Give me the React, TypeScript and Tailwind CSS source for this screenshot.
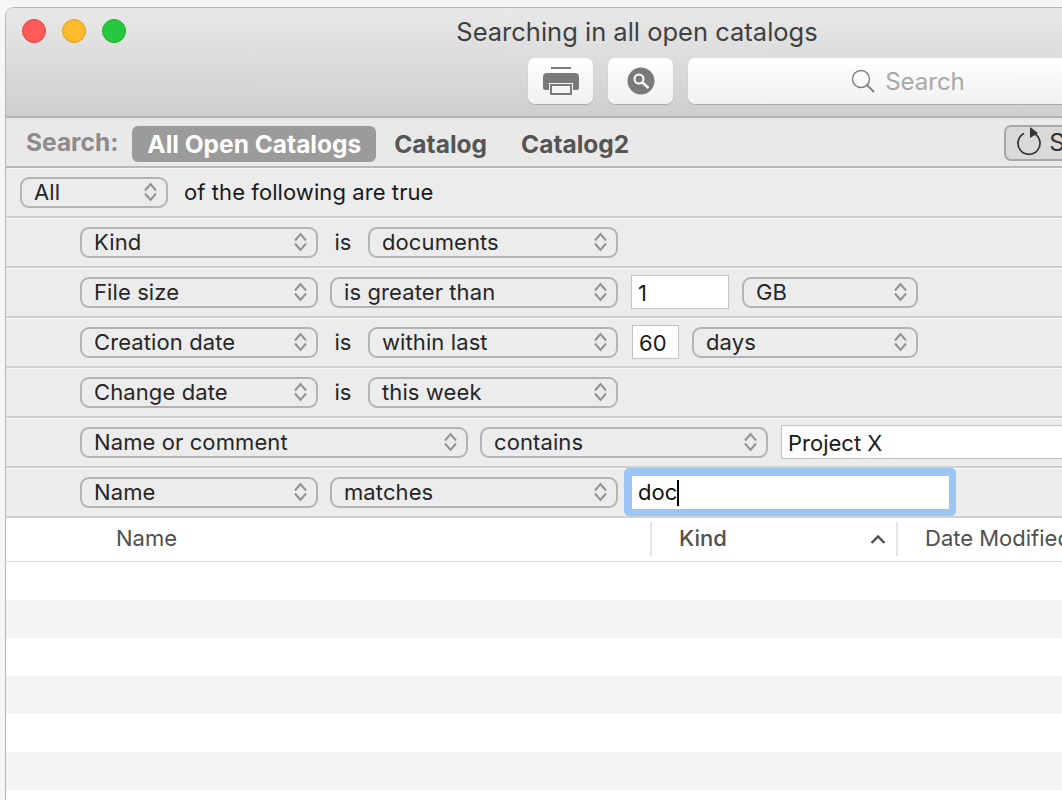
import React from 'react';

const font = { fontFamily: 'Inter, "Liberation Sans", sans-serif' };

const Stepper = () => (
    <svg width="13" height="20" viewBox="0 0 13 20" fill="none" stroke="#939393" strokeWidth="2" className="shrink-0">
        <path d="M1 8.5 L6.5 2 L12 8.5" />
        <path d="M1 11.5 L6.5 18 L12 11.5" />
    </svg>
);

const Select: React.FC<{ label: string; width: string }> = ({ label, width }) => (
    <div className={`${width} h-[31px] shrink-0 flex items-center justify-between pl-[12px] pr-[9px] rounded-[9px] border-2 border-[#b3b3b3] bg-[#ececec] text-[22px] text-[#262626]`}>
        <span className="tracking-[0.1px]">{label}</span>
        <Stepper />
    </div>
);

const Row: React.FC<{ children: React.ReactNode }> = ({ children }) => (
    <div className="h-[50px] flex items-center pl-[74px] border-b-2 border-[#cfcfcf] shadow-[inset_0_1px_0_#f8f8f8]">
        {children}
    </div>
);

const Is = () => <span className="w-[50px] text-center text-[22px] text-[#262626] shrink-0">is</span>;

const TextBox: React.FC<{ value: string; width: string; className?: string }> = ({ value, width, className }) => (
    <div className={`${width} ${className ?? ''} h-[34px] shrink-0 flex items-center pl-[6px] pt-[3px] bg-white border border-[#c4c4c4] text-[22px] text-[#1a1a1a]`}>
        {value}
    </div>
);

export default function App() {
    const stripes = ['bg-white', 'bg-[#f4f4f4]', 'bg-white', 'bg-[#f4f4f4]', 'bg-white', 'bg-[#f4f4f4]'];

    return (
        <div style={font} className="h-[800px] w-[1062px] overflow-hidden bg-[#f6f6f6] pl-[5px] pt-[7px]">
            <div className="w-[1262px] h-[793px] rounded-t-[9px] border-l border-t border-[#b5b5b5] bg-white overflow-hidden">
                {/* title bar and toolbar */}
                <div className="h-[110px] bg-gradient-to-b from-[#e8e8e8] to-[#cfcfcf] border-b-2 border-[#b2b2b2] pl-[15px] pr-[16px] pt-[11px]">
                    <div className="relative h-[26px] flex items-center justify-center pl-[2px] text-[25.5px] text-[#3f3f3f]">
                        <div className="absolute left-[1px] top-0 flex gap-[16px]">
                            <span className="w-6 h-6 rounded-full bg-[#fc5b57] border border-[#e0443e]" />
                            <span className="w-6 h-6 rounded-full bg-[#febb2e] border border-[#dfa023]" />
                            <span className="w-6 h-6 rounded-full bg-[#26c83f] border border-[#1dad2b]" />
                        </div>
                        Searching in all open catalogs
                    </div>
                    <div className="flex gap-[15px] mt-[13px] pl-[507px]">
                        <div className="w-[65px] h-[46px] flex items-center justify-center rounded-[7px] bg-gradient-to-b from-white to-[#f1f1f1] shadow-[0_1px_1px_#aaaaaa]">
                            <svg width="36" height="30" viewBox="0 0 36 30">
                                <path d="M8 1 H28 V3 H8 Z" fill="#7a7a7a" />
                                <path d="M4 7 H32 Q36 7 36 11 V22 Q36 24 33 24 H30 V17 H6 V24 H3 Q0 24 0 22 V11 Q0 7 4 7 Z" fill="#7a7a7a" />
                                <path d="M7 18 H29 V29 H7 Z M9 20 V27 H27 V20 Z" fill="#7a7a7a" fillRule="evenodd" />
                            </svg>
                        </div>
                        <div className="w-[65px] h-[46px] flex items-center justify-center rounded-[7px] bg-gradient-to-b from-white to-[#f1f1f1] shadow-[0_1px_1px_#aaaaaa]">
                            <svg width="28" height="28" viewBox="0 0 28 28">
                                <circle cx="14" cy="14" r="13.5" fill="#7a7a7a" />
                                <circle cx="12" cy="12" r="4.5" fill="none" stroke="#fff" strokeWidth="2" />
                                <path d="M15.5 15.5 L21.5 21" stroke="#fff" strokeWidth="2.4" />
                            </svg>
                        </div>
                        <div className="w-[440px] h-[46px] flex items-center justify-center gap-[10px] rounded-[7px] bg-gradient-to-b from-white to-[#f1f1f1] shadow-[0_1px_1px_#aaaaaa] text-[24px] text-[#a8a8a8]">
                            <svg width="24" height="24" viewBox="0 0 24 24" fill="none" stroke="#7f7f7f" strokeWidth="1.4">
                                <circle cx="10" cy="10" r="8.5" />
                                <path d="M16 16 L23 23" strokeWidth="1.8" />
                            </svg>
                            <span className="pt-[2px]">Search</span>
                        </div>
                    </div>
                </div>

                {/* scope bar */}
                <div className="h-[50px] bg-[#e9e9e9] border-b-2 border-[#b9b9b9] flex items-center pl-[20px] pt-[4px] text-[24.5px] font-bold text-[#555555]">
                    <span className="text-[#8c8c8c] mr-[14px] -mt-[4px]">Search:</span>
                    <span className="h-[36px] flex items-center px-[15px] rounded-[6px] bg-[#9b9b9b] text-white">All Open Catalogs</span>
                    <span className="ml-[18px]">Catalog</span>
                    <span className="ml-[34px]">Catalog2</span>
                    <span className="ml-[375px] -mt-[3px] h-[36px] w-[120px] flex items-center gap-[6px] pl-[11px] rounded-[7px] border-2 border-[#a8a8a8] bg-[#d9d9d9] font-normal text-[#333333]">
                        <svg width="26" height="30" viewBox="0 0 26 30" fill="none" className="shrink-0 -mt-[4px]">
                            <path d="M7 7.5 A11 11 0 1 0 17 7.5" stroke="#333333" strokeWidth="1.7" />
                            <path d="M13 1 L21 7 L13 12 Z" fill="#333333" />
                        </svg>
                        Save
                    </span>
                </div>

                {/* rules */}
                <div className="bg-[#ececec]">
                    <div className="h-[50px] flex items-center pl-[14px] border-b-2 border-[#cfcfcf] shadow-[inset_0_1px_0_#f8f8f8]">
                        <Select label="All" width="w-[148px]" />
                        <span className="ml-[16px] text-[22px] tracking-[0.08px] text-[#1a1a1a]">of the following are true</span>
                    </div>
                    <Row>
                        <Select label="Kind" width="w-[238px]" />
                        <Is />
                        <Select label="documents" width="w-[250px]" />
                    </Row>
                    <Row>
                        <Select label="File size" width="w-[238px]" />
                        <div className="w-[12px]" />
                        <Select label="is greater than" width="w-[288px]" />
                        <TextBox value="1" width="w-[98px]" className="ml-[13px] mr-[13px]" />
                        <Select label="GB" width="w-[176px]" />
                    </Row>
                    <Row>
                        <Select label="Creation date" width="w-[238px]" />
                        <Is />
                        <Select label="within last" width="w-[250px]" />
                        <TextBox value="60" width="w-[47px]" className="ml-[14px] mr-[13px]" />
                        <Select label="days" width="w-[226px]" />
                    </Row>
                    <Row>
                        <Select label="Change date" width="w-[238px]" />
                        <Is />
                        <Select label="this week" width="w-[250px]" />
                    </Row>
                    <Row>
                        <Select label="Name or comment" width="w-[388px]" />
                        <div className="w-[12px]" />
                        <Select label="contains" width="w-[288px]" />
                        <TextBox value="Project X" width="w-[420px]" className="ml-[13px]" />
                    </Row>
                    <Row>
                        <Select label="Name" width="w-[238px]" />
                        <div className="w-[12px]" />
                        <Select label="matches" width="w-[288px]" />
                        <div className="ml-[6px] w-[332px] h-[48px] shrink-0 rounded-[5px] bg-[#9bc5f4] p-[8px] pr-[7px] pb-[7px]">
                            <div className="h-[33px] flex items-center pl-[6px] bg-white text-[22px] text-[#111111]">
                                doc<span className="w-[2px] h-[26px] bg-black" />
                            </div>
                        </div>
                    </Row>
                </div>

                {/* results table */}
                <div className="h-[44px] flex items-center bg-white border-b border-[#dddddd] pb-[2px] text-[22px] text-[#4f4f4f]">
                    <div className="w-[646px] h-[34px] flex items-center pl-[110px] border-r-2 border-[#e4e4e4]">Name</div>
                    <div className="w-[246px] h-[34px] flex items-center justify-between pl-[27px] pr-[10px] border-r-2 border-[#e4e4e4] font-medium">
                        Kind
                        <svg width="16" height="10" viewBox="0 0 16 10" fill="none" stroke="#4f4f4f" strokeWidth="2.4">
                            <path d="M1.5 9 L8 2.5 L14.5 9" />
                        </svg>
                    </div>
                    <div className="pl-[27px]">Date Modified</div>
                </div>
                {stripes.map((stripe, i) => (
                    <div key={i} className={`h-[38px] ${stripe}`} />
                ))}
            </div>
        </div>
    );
}
